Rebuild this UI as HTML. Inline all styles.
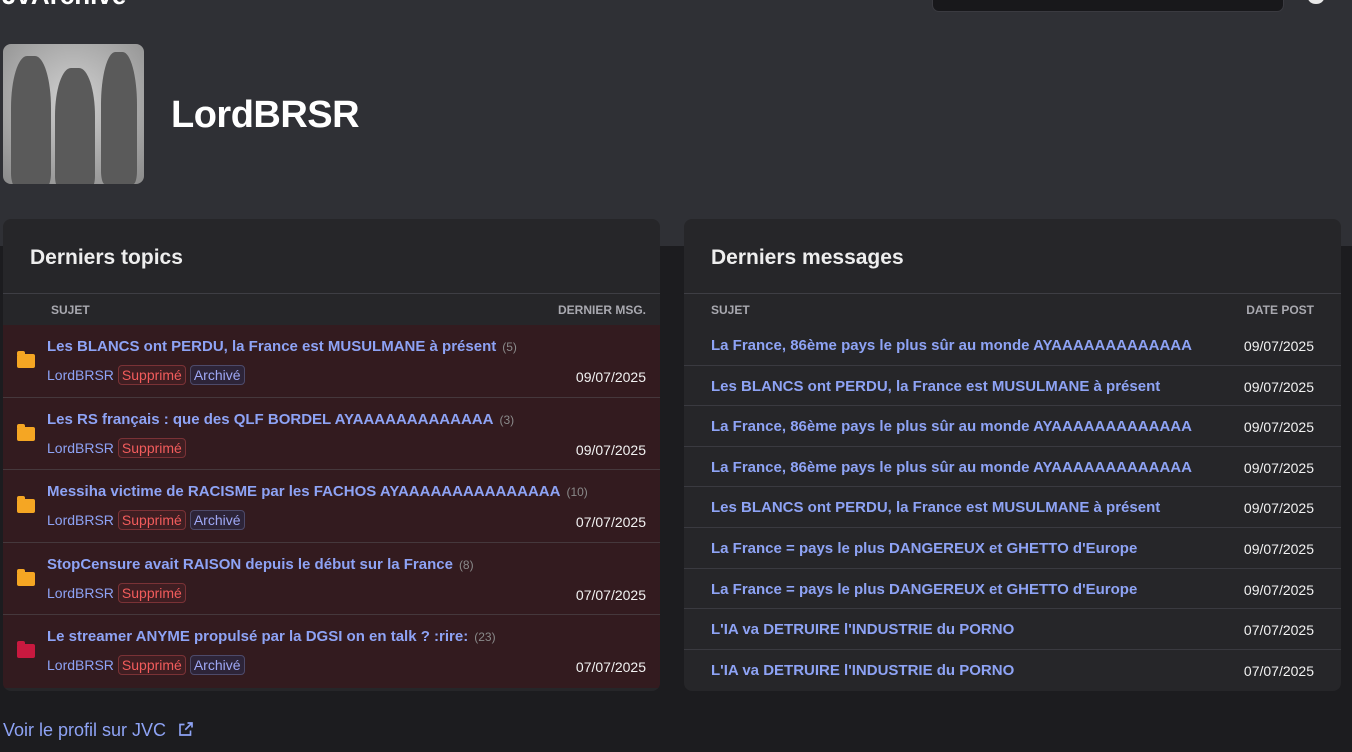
<!DOCTYPE html>
<html><head><meta charset="utf-8"><style>
*{box-sizing:border-box;margin:0;padding:0}
body{width:1352px;height:752px;overflow:hidden;background:#1c1c1f;font-family:"Liberation Sans",sans-serif;position:relative;color:#e8e8e8}
.top{position:absolute;left:0;top:0;width:1352px;height:246px;background:#2f3035}
.logo{position:absolute;left:2px;top:-20px;font-size:26px;font-weight:bold;color:#fff}
.search{position:absolute;left:932px;top:-10px;width:352px;height:22px;background:#18181b;border:1px solid #3a3a40;border-radius:7px}
.circ{position:absolute;left:1308px;top:-8px;width:16px;height:12px;border-radius:50%;background:#e8e8e8}
.avatar{position:absolute;left:3px;top:44px;width:141px;height:140px;border-radius:8px;background:radial-gradient(circle at 50% 40%,#d0d0d0,#8a8a8a);overflow:hidden}
.avatar i{position:absolute;background:#5a5a5a;border-radius:40% 40% 10% 10%}
.name{position:absolute;left:171px;top:94px;font-size:38px;font-weight:bold;color:#fff;letter-spacing:-0.5px}
.card{position:absolute;top:219px;height:472px;background:#262629;border-radius:8px;overflow:hidden}
.card h2{font-size:21px;font-weight:bold;color:#eee;padding:27px 0 0 27px;height:75px;border-bottom:1px solid #3e3e44}
.hd{height:31px;font-size:12px;font-weight:bold;color:#a9a9b0;position:relative}
.hd span{position:absolute;top:9px}
.row{position:relative;border-bottom:1px solid #45383c}
.l .row{height:72.5px;background:#331b1f}
.t{position:absolute;left:44px;top:13px;font-size:15px;font-weight:bold;color:#8ea3f5;white-space:nowrap}
.t small{font-weight:normal;color:#8a8a8a;font-size:12px;margin-left:6px}
.meta{position:absolute;left:44px;top:40px;font-size:14px;color:#8ea3f5;display:flex;gap:4px;align-items:center}
.b{font-size:14px;padding:1px 3px;border-radius:4px}
.sup{color:#f25c5c;border:1px solid #7a3236;background:#3f1e22}
.arc{color:#9fa8f5;border:1px solid #4d4a6a;background:#2d2438}
.date{position:absolute;right:14px;font-size:14px;color:#f2f2f2}
.fold{position:absolute;left:14px;top:29px;width:18px;height:14px;background:#f5a623;border-radius:2px}
.fold:before{content:"";position:absolute;left:0;top:-3px;width:8px;height:4px;background:inherit;border-radius:2px 2px 0 0}
.r .row{height:40.6px;border-bottom:1px solid #3a3a40}
.r .t{left:27px;top:12px}
.r .date{top:13px;right:27px}
.link{position:absolute;left:3px;top:720px;font-size:18px;color:#8ea3f5}
</style></head><body>
<div class="top"></div>
<div class="logo">JvArchive</div>
<div class="search"></div><div class="circ"></div>
<div class="avatar"><i style="left:8px;top:12px;width:40px;height:130px"></i><i style="left:52px;top:24px;width:40px;height:120px"></i><i style="left:98px;top:8px;width:36px;height:132px"></i></div>
<div class="name">LordBRSR</div>

<div class="card l" style="left:3px;width:657px">
<h2>Derniers topics</h2>
<div class="hd"><span style="left:48px">SUJET</span><span style="right:14px">DERNIER MSG.</span></div>
<div class="row"><div class="fold"></div><div class="t">Les BLANCS ont PERDU, la France est MUSULMANE à présent<small>(5)</small></div><div class="meta">LordBRSR <span class="b sup">Supprimé</span><span class="b arc">Archivé</span></div><div class="date" style="top:44px">09/07/2025</div></div>
<div class="row"><div class="fold"></div><div class="t">Les RS français : que des QLF BORDEL AYAAAAAAAAAAAAA<small>(3)</small></div><div class="meta">LordBRSR <span class="b sup">Supprimé</span></div><div class="date" style="top:44px">09/07/2025</div></div>
<div class="row"><div class="fold"></div><div class="t">Messiha victime de RACISME par les FACHOS AYAAAAAAAAAAAAAAA<small>(10)</small></div><div class="meta">LordBRSR <span class="b sup">Supprimé</span><span class="b arc">Archivé</span></div><div class="date" style="top:44px">07/07/2025</div></div>
<div class="row"><div class="fold"></div><div class="t">StopCensure avait RAISON depuis le début sur la France<small>(8)</small></div><div class="meta">LordBRSR <span class="b sup">Supprimé</span></div><div class="date" style="top:44px">07/07/2025</div></div>
<div class="row" style="border:none"><div class="fold" style="background:#c8193f"></div><div class="t">Le streamer ANYME propulsé par la DGSI on en talk ? :rire:<small>(23)</small></div><div class="meta">LordBRSR <span class="b sup">Supprimé</span><span class="b arc">Archivé</span></div><div class="date" style="top:44px">07/07/2025</div></div>
</div>

<div class="card r" style="left:684px;width:657px">
<h2>Derniers messages</h2>
<div class="hd"><span style="left:27px">SUJET</span><span style="right:27px">DATE POST</span></div>
<div class="row"><div class="t">La France, 86ème pays le plus sûr au monde AYAAAAAAAAAAAAA</div><div class="date">09/07/2025</div></div>
<div class="row"><div class="t">Les BLANCS ont PERDU, la France est MUSULMANE à présent</div><div class="date">09/07/2025</div></div>
<div class="row"><div class="t">La France, 86ème pays le plus sûr au monde AYAAAAAAAAAAAAA</div><div class="date">09/07/2025</div></div>
<div class="row"><div class="t">La France, 86ème pays le plus sûr au monde AYAAAAAAAAAAAAA</div><div class="date">09/07/2025</div></div>
<div class="row"><div class="t">Les BLANCS ont PERDU, la France est MUSULMANE à présent</div><div class="date">09/07/2025</div></div>
<div class="row"><div class="t">La France = pays le plus DANGEREUX et GHETTO d'Europe</div><div class="date">09/07/2025</div></div>
<div class="row"><div class="t">La France = pays le plus DANGEREUX et GHETTO d'Europe</div><div class="date">09/07/2025</div></div>
<div class="row"><div class="t">L'IA va DETRUIRE l'INDUSTRIE du PORNO</div><div class="date">07/07/2025</div></div>
<div class="row" style="border:none"><div class="t">L'IA va DETRUIRE l'INDUSTRIE du PORNO</div><div class="date">07/07/2025</div></div>
</div>

<div class="link">Voir le profil sur JVC <svg width="18" height="18" viewBox="0 0 24 24" fill="none" stroke="#8ea3f5" stroke-width="2.2" style="vertical-align:-2px;margin-left:6px"><path d="M14 4h6v6M20 4l-9 9M18 14v6H4V6h6"/></svg></div>
</body></html>
